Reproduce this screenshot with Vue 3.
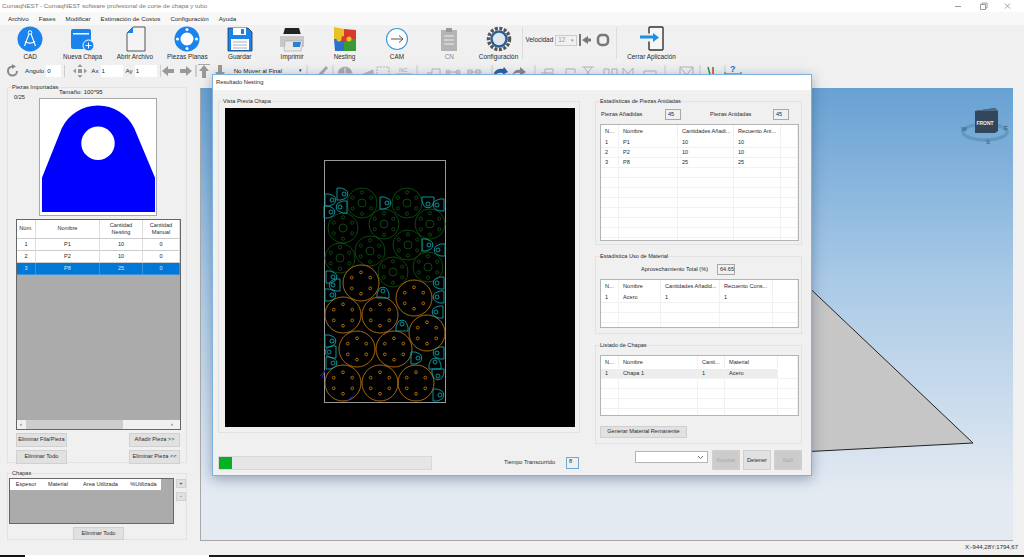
<script setup>
const green = [[362,203],[407,203],[343,228],[384,224],[430,224],[340,258],[370,251],[408,245],[393,272],[428,267]]
const orange = [[361,283],[414,298],[343,315],[380,315],[427,333],[357,349],[394,349],[343,383],[380,383],[416,383]]
const tabs = [[343,194,90],[331,200,90],[341,207,-90],[330,212,90],[386,203,90],[428,203,180],[438,205,-90],[428,245,90],[439,250,-90],[332,277,90],[334,285,-90],[438,283,-90],[331,295,90],[383,292,0],[402,325,0],[438,297,-90],[437,312,-90],[331,341,90],[330,352,-90],[332,363,90],[417,358,90],[438,353,-90],[435,363,0],[438,375,180],[439,395,90]]
const ring = [0,1,2,3,4,5].map(k => {
  const a = (k * 60 - 90) * Math.PI / 180
  return [Math.cos(a) * 10.7, Math.sin(a) * 10.7]
})

const piezas = [
  { n: 1, name: 'P1', nest: 10, man: 0 },
  { n: 2, name: 'P2', nest: 10, man: 0 },
  { n: 3, name: 'P8', nest: 25, man: 0, sel: true }
]

const statLists = [
  {
    title: 'Estadísticas de Piezas Anidadas', cls: 'g-a', height: 117, cols: [18, 59, 56, 47, 19],
    head: ['N...', 'Nombre', 'Cantidades Añadi...', 'Recuento Ani...', ''],
    rows: [['1','P1','10','10',''],['2','P2','10','10',''],['3','P8','25','25','']], blanks: 9
  },
  {
    title: 'Estadística Uso de Material', cls: 'g-b', height: 49, cols: [18, 42, 59, 53, 27],
    head: ['N...', 'Nombre', 'Cantidades Añadid...', 'Recuento Cons...', ''],
    rows: [['1','Acero','1','1','']], blanks: 3
  },
  {
    title: 'Listado de Chapas', cls: 'g-c', height: 61, cols: [18, 79, 27, 53, 22],
    head: ['N...', 'Nombre', 'Canti...', 'Material', ''],
    rows: [['1','Chapa 1','1','Acero','']], blanks: 4, pick: true
  }
]

const colsOf = c => c.slice(0, -1).map(w => w + 'px').join(' ') + ' 1fr'
</script>

<template>
  <div class="app">
    <div class="title">
      <span>CumaqNEST - CumaqNEST software profesional de corte de chapa y tubo</span>
      <div class="winbtns">
        <svg width="70" height="10" viewBox="0 0 70 10">
          <path d="M2 5.500H8" stroke="#999" />
          <path d="M27.500 3.500h5v5h-5zM29 3.500V2h5v5h-1.500" fill="none" stroke="#888" stroke-width=".8" />
          <path d="M52 2.500l5 5M57 2.500l-5 5" stroke="#888" stroke-width=".8" />
        </svg>
      </div>
    </div>

    <div class="menu">
      <span>Archivo</span><span>Fases</span><span>Modificar</span><span>Estimación de Costos</span><span>Configuración</span><span>Ayuda</span>
    </div>

    <div class="tools">
      <div class="tool">
        <svg width="26" height="26" viewBox="0 0 26 26">
          <circle cx="13" cy="13" r="12.500" fill="#1a84ee" />
          <circle cx="13" cy="6.500" r="1.800" fill="none" stroke="#fff" />
          <path d="M12 8l-4.500 12M14 8l4.500 12M8 15.500c3 2 7 2 10 0" fill="none" stroke="#fff" stroke-width="1.100" />
        </svg>
        <span>CAD</span>
      </div>
      <div class="tool">
        <svg width="26" height="26" viewBox="0 0 26 26">
          <rect x="1" y="3" width="20" height="20" rx="2" fill="#1a84ee" />
          <rect x="3" y="7" width="16" height="1.500" fill="#fff" />
          <circle cx="18.500" cy="19.500" r="5.500" fill="#1a84ee" stroke="#fff" />
          <path d="M18.500 16.500v6M15.500 19.500h6" stroke="#fff" />
        </svg>
        <span>Nueva Chapa</span>
      </div>
      <div class="tool">
        <svg width="26" height="26" viewBox="0 0 26 26">
          <path d="M11 1H23V25H5V7z" fill="#f4f4f4" stroke="#555" />
          <path d="M11 1V7H5z" fill="#1a84ee" />
        </svg>
        <span>Abrir Archivo</span>
      </div>
      <div class="tool">
        <svg width="26" height="26" viewBox="0 0 26 26">
          <circle cx="13" cy="13" r="9.500" fill="#fff" stroke="#1a84ee" stroke-width="6" />
          <circle cx="13" cy="3.500" r="1.500" fill="#fff" />
          <circle cx="13" cy="22.500" r="1.500" fill="#fff" />
          <circle cx="3.500" cy="13" r="1.500" fill="#fff" />
          <circle cx="22.500" cy="13" r="1.500" fill="#fff" />
        </svg>
        <span>Piezas Planas</span>
      </div>
      <div class="tool">
        <svg width="26" height="26" viewBox="0 0 26 26">
          <path d="M1 2H21L25 6V25H1z" fill="#1a84ee" stroke="#234" stroke-width=".8" />
          <rect x="6" y="2" width="13" height="7" fill="#fff" />
          <rect x="14" y="3" width="3" height="5" fill="#1a84ee" />
          <rect x="4" y="13" width="18" height="11" fill="#fff" />
          <path d="M6 16h14M6 19h14M6 22h14" stroke="#99a" stroke-width=".8" />
        </svg>
        <span>Guardar</span>
      </div>
      <div class="tool">
        <svg width="26" height="26" viewBox="0 0 26 26">
          <path d="M6 2H20L22 9H4z" fill="#222" />
          <path d="M1 10H25V21H1z" fill="#c8c8c8" />
          <path d="M1 10H25L22 8H4z" fill="#eee" />
          <path d="M6 15H24L22 25H5z" fill="#e8e8e8" stroke="#999" stroke-width=".5" />
          <path d="M14 16H22L21 21H14z" fill="#2a7fd0" />
        </svg>
        <span>Imprimir</span>
      </div>
      <div class="tool">
        <svg width="26" height="26" viewBox="0 0 26 26">
          <path d="M2 1L12 3V13H2z" fill="#e9c026" />
          <path d="M12 3L24 4V13H12z" fill="#d63a2c" />
          <path d="M2 13H12V25H3z" fill="#2d6fc9" />
          <path d="M12 13H24V25H12z" fill="#3a9a35" />
          <circle cx="12" cy="13" r="3" fill="#d63a2c" />
          <circle cx="7" cy="13" r="2.500" fill="#e9c026" />
          <circle cx="17" cy="13" r="2.500" fill="#e9c026" />
        </svg>
        <span>Nesting</span>
      </div>
      <div class="tool">
        <svg width="26" height="26" viewBox="0 0 26 26">
          <circle cx="13" cy="13" r="10.500" fill="#fff" stroke="#3a9ad9" stroke-width="1.100" />
          <path d="M7 13H19M15 9.500l4 3.500-4 3.500" fill="none" stroke="#555" />
        </svg>
        <span>CAM</span>
      </div>
      <div class="tool off">
        <svg width="26" height="26" viewBox="0 0 26 26">
          <path d="M5 4H21V25H5z" fill="#b4b4b4" />
          <rect x="10" y="2" width="6" height="4" fill="#999" />
          <path d="M8 10h10M8 14h10M8 18h10" stroke="#eee" stroke-width="1.200" />
        </svg>
        <span>CN</span>
      </div>
      <div class="tool conf">
        <svg width="26" height="26" viewBox="0 0 26 26">
          <circle cx="13" cy="13" r="10.500" fill="#fff" stroke="#555" stroke-width="3.500" stroke-dasharray="3 1.500" />
          <circle cx="13" cy="13" r="7.500" fill="#dfe6ec" stroke="#2c5f94" stroke-width="2.500" />
        </svg>
        <span>Configuración</span>
      </div>
      <i class="vsep"></i>
      <div class="speed">
        <span>Velocidad</span>
        <span class="speedbox">12<b>▾</b></span>
        <svg width="32" height="14" viewBox="0 0 32 14">
          <path d="M1 1V13" stroke="#777" stroke-width="2" />
          <path d="M3 7L9 3V11zM9 5.500h3v3H9z" fill="#777" />
          <rect x="19" y="2" width="10" height="10" rx="3.500" fill="none" stroke="#777" stroke-width="2.500" />
        </svg>
      </div>
      <i class="vsep"></i>
      <div class="tool close">
        <svg width="26" height="26" viewBox="0 0 26 26">
          <rect x="10" y="1" width="14" height="23" rx="1" fill="#f6f6f6" stroke="#333" stroke-width="1.400" />
          <path d="M10 7.500V15.500" stroke="#f0f0f0" stroke-width="2" />
          <path d="M1 11H15" stroke="#1a90e0" stroke-width="3" />
          <path d="M14 7l6 4.500-6 4.500z" fill="#1a90e0" />
        </svg>
        <span>Cerrar Aplicación</span>
      </div>
    </div>

    <div class="tools2">
      <svg class="ic" width="14" height="14" viewBox="0 0 14 14">
        <path d="M11 7a4.500 4.500 0 1 1-4.500-4.500" fill="none" stroke="#888" stroke-width="2" />
        <path d="M6 0l4 2.500-4 2.500z" fill="#888" />
      </svg>
      <span class="lb ang">Angulo</span><span class="inp w15">0</span>
      <i class="vsep2"></i>
      <svg class="ic move" width="14" height="14" viewBox="0 0 14 14">
        <path d="M7 0l2.500 3h-5zM7 14l2.500-3h-5zM0 7l3-2.500v5zM14 7l-3-2.500v5zM5 5h4v4H5z" fill="#999" />
      </svg>
      <span class="lb">Ax</span><span class="inp w22">1</span>
      <span class="lb ay">Ay</span><span class="inp w22">1</span>
      <svg class="arrows" width="70" height="14" viewBox="0 0 70 14">
        <path d="M0 1V13" stroke="#aaa" />
        <path d="M2 7l6-5v3h6v4H8v3zM32 7l-6-5v3h-6v4h6v3z" fill="#999" />
        <path d="M36 1V13" stroke="#aaa" />
        <path d="M38 0.500H50" stroke="#aaa" />
        <path d="M44 1l5 6h-3v7h-4V7h-3zM60 14l5-6h-3V1h-4v7h-3z" fill="#999" />
      </svg>
      <span class="drop">No Mover al Final<b>▾</b></span>
      <svg class="strip" width="440" height="14" viewBox="305 0 440 14">
        <g fill="none" stroke="#b4b4b4" stroke-width="1">
          <path d="M307 1V14M333 1V14M417 1V14M492 1V14M535 1V14M665 1V14M700 1V14M725 1V14" stroke="#ccc" />
          <path d="M317 14l10-11" stroke="#aaa" stroke-width="3" />
          <circle cx="345" cy="10" r="7" fill="#aaa" />
          <path d="M345 4v12M338 10h14" stroke="#eee" />
          <path d="M357 13l16-7v7z" fill="#bbb" />
          <path d="M377 3h12v11h-12z" stroke-dasharray="2 1" />
          <path d="M396 10h16" />
          <path d="M427 9h5V5h8v9" />
          <path d="M446 8h14M468 8h14" />
          <circle cx="448" cy="8" r="2" /><circle cx="458" cy="8" r="2" /><rect x="468" y="6" width="4" height="4" /><rect x="476" y="6" width="4" height="4" />
          <path d="M541 9h12v5M545 9V5h8v3" />
          <path d="M566 14V5h9v4" />
          <path d="M582 3h12M584 3l8 11M592 3l-8 11" />
          <path d="M604 14V5h5v9M612 14V5h5v9" />
          <path d="M623 14V4l5 6 5-6v10" />
          <path d="M644 14V7h12v7" />
          <path d="M680 3h13v11h-13zM680 3l6.500 8 6.500-8" />
        </g>
        <text x="399" y="8" class="nc">NC</text>
        <path d="M494 9q3-5 9-4l1-2 4 5-6 3 1-2q-5-1-8 2z" fill="#2a5fa8" />
        <path d="M512 11q3-6 8-5l0-3 6 5-6 4v-3q-4-1-8 2z" fill="#888" />
        <path d="M708 3l3 11" stroke="#2a9a3a" stroke-width="1.500" />
        <path d="M713 3v11" stroke="#d43a2c" stroke-width="1.500" />
        <path d="M725 8v3M741 8v3M725 10h16" stroke="#2a6fc0" fill="none" />
        <text x="730" y="8" class="help">?</text>
      </svg>
    </div>

    <div class="main">
      <aside class="left">
        <fieldset class="box imported">
          <legend>Piezas Importadas</legend>
          <div class="previewrow">
            <span class="count">0/25</span>
            <div class="previewcol">
              <span class="size">Tamaño: 100*95</span>
              <svg class="preview" width="118" height="118" viewBox="39 98 118 118">
                <path fill-rule="evenodd" fill="#0000ff" d="M41 213V178L61 128A41 41 0 0 1 135 128L156 178V213ZM115 143A17 17 0 1 0 81 143A17 17 0 1 0 115 143Z" />
              </svg>
            </div>
          </div>
          <div class="ptable">
            <div class="prow phead">
              <span>Núm.</span><span>Nombre</span><span>Cantidad<br>Nesting</span><span>Cantidad<br>Manual</span>
            </div>
            <div v-for="p in piezas" :key="p.n" class="prow" :class="{ sel: p.sel }">
              <span>{{ p.n }}</span><span>{{ p.name }}</span><span>{{ p.nest }}</span><span>{{ p.man }}</span>
            </div>
            <div class="pfill"></div>
            <div class="hscroll">
              <b>‹</b><i></i><b>›</b>
            </div>
          </div>
          <div class="btnrow">
            <button>Eliminar Fila/Pieza</button><button>Añadir Pieza &gt;&gt;</button>
          </div>
          <div class="btnrow">
            <button>Eliminar Todo</button><button>Eliminar Pieza &lt;&lt;</button>
          </div>
        </fieldset>

        <fieldset class="box chapas">
          <legend>Chapas</legend>
          <div class="chaprow">
            <div class="ctable">
              <div class="chead">
                <span>Espesor</span><span>Material</span><span>Area Utilizada</span><span>%Utilizada</span>
              </div>
            </div>
            <div class="pm"><button>+</button><button>-</button></div>
          </div>
          <button class="delall">Eliminar Todo</button>
        </fieldset>
      </aside>

      <div class="view">
        <svg width="813" height="453" viewBox="200 88 813 453">
          <path d="M800 279L973 443L800 452Z" fill="#c6c6c6" stroke="#222" />
          <ellipse cx="985" cy="132" rx="22" ry="8" fill="none" stroke="#5f93bb" stroke-width="3.500" opacity=".8" />
          <path d="M975 111l20-3 3 3v20l-3 2h-20z" fill="#33475c" />
          <path d="M975 111l20-3 3 3h-23z" fill="#50687f" />
          <text x="985" y="125" class="cube">FRONT</text>
          <text x="964" y="131" class="compass">W</text>
          <text x="1006" y="130" class="compass">E</text>
          <text x="988" y="144" class="compass">S</text>
        </svg>
      </div>
      <div class="strip-r"></div>
    </div>

    <div class="status"><span>X:-944,28Y:1794,67</span></div>
    <div class="taskbar"><i></i><i></i><i></i></div>

    <div class="dialog">
      <div class="dtitle">Resultado Nesting</div>
      <div class="dbody">
        <div class="dmain">
          <fieldset class="box vista">
            <legend>Vista Previa Chapa</legend>
            <svg class="canvas" width="350" height="319" viewBox="225 108 350 319">
              <rect x="324.500" y="160.500" width="121" height="242" fill="none" stroke="#999" />
              <g fill="none" stroke="#0f4f10" stroke-width=".9">
                <g v-for="(c, i) in green" :key="'g' + i" :transform="`translate(${c[0]} ${c[1]})`">
                  <circle r="15" />
                  <circle r="4" />
                  <circle v-for="(h, j) in ring" :key="j" :cx="h[0]" :cy="h[1]" r="1.600" />
                </g>
              </g>
              <g fill="none" stroke="#b9740f" stroke-width=".9">
                <g v-for="(c, i) in orange" :key="'o' + i" :transform="`translate(${c[0]} ${c[1]})`">
                  <circle r="18" />
                  <circle v-for="(h, j) in ring" :key="j" :cx="h[0]" :cy="h[1]" r="1.400" />
                </g>
              </g>
              <g fill="none" stroke="#0fa3a8" stroke-width=".9">
                <g v-for="(t, i) in tabs" :key="'t' + i" :transform="`translate(${t[0]} ${t[1]}) rotate(${t[2]})`">
                  <path d="M-6 6V2L-4.500-2A5 5 0 0 1 4.500-2L6 2V6Z" />
                  <circle cy="-1" r="2" />
                </g>
              </g>
              <path d="M320 376l5-5M322 378l3-8M346 402l7-6" stroke="#2222cc" fill="none" />
            </svg>
          </fieldset>
          <div class="stats">
            <fieldset v-for="l in statLists" :key="l.title" class="box" :class="l.cls">
              <legend>{{ l.title }}</legend>
              <div v-if="l.cls === 'g-a'" class="counts">
                <span>Piezas Añadidas</span><span class="val">45</span>
                <span>Piezas Anidadas</span><span class="val">45</span>
              </div>
              <div v-if="l.cls === 'g-b'" class="usage">
                <span>Aprovechamiento Total (%)</span><span class="val">64.65</span>
              </div>
              <div class="list" :style="{ height: l.height + 'px' }">
                <div class="lrow lhead" :style="{ gridTemplateColumns: colsOf(l.cols) }">
                  <span v-for="(h, i) in l.head" :key="i">{{ h }}</span>
                </div>
                <div v-for="(r, k) in l.rows" :key="k" class="lrow" :class="{ hl: l.pick }" :style="{ gridTemplateColumns: colsOf(l.cols) }">
                  <span v-for="(v, i) in r" :key="i">{{ v }}</span>
                </div>
                <div v-for="b in l.blanks" :key="'b' + b" class="lrow" :style="{ gridTemplateColumns: colsOf(l.cols) }">
                  <span v-for="(v, i) in l.cols" :key="i"></span>
                </div>
              </div>
              <button v-if="l.pick" class="gen">Generar Material Remanente</button>
            </fieldset>
          </div>
        </div>
        <div class="dfoot">
          <div class="progress"><i></i></div>
          <span class="elapsed">Tiempo Transcurrido</span>
          <span class="timebox">8</span>
          <span class="combo"><svg width="7" height="5" viewBox="0 0 7 5"><path d="M1 1l2.500 2.500L6 1" fill="none" stroke="#666" /></svg></span>
          <button class="big" disabled>Aceptar</button>
          <button class="big">Detener</button>
          <button class="big" disabled>Salir</button>
        </div>
      </div>
    </div>
  </div>
</template>

<style>
html, body { margin: 0; overflow: hidden; }
</style>

<style scoped>
.app {
  position: relative;
  display: flex;
  flex-direction: column;
  width: 1024px;
  height: 557px;
  overflow: hidden;
  background: #f0f0f0;
  color: #2a2a2a;
  font: 5.600px/1.2 "Liberation Sans", Arial, sans-serif;
}
.title {
  display: flex;
  justify-content: space-between;
  align-items: center;
  height: 12px;
  padding-left: 2px;
  background: #fff;
  color: #777;
  font-size: 6.200px;
}
.winbtns { display: flex; padding-right: 1px; }
.menu {
  display: flex;
  gap: 10px;
  align-items: center;
  height: 13px;
  padding-left: 8px;
  background: #f8f8f8;
  font-size: 6.200px;
}

.tools {
  display: flex;
  align-items: flex-start;
  height: 37px;
  padding-left: 4px;
  flex: none;
  font-size: 6.400px;
}
.tool {
  display: flex;
  flex-direction: column;
  align-items: center;
  width: 52.400px;
  padding-top: 1px;
  height: 36px;
  box-sizing: border-box;
  justify-content: space-between;
  white-space: nowrap;
}
.tool svg { flex: none; }
.tool.off { color: #888; }
.tool.conf { width: 46px; }
.tool.close { width: 68px; margin-left: 1px; }
.vsep { width: 1px; height: 32px; margin-top: 2px; background: #ddd; }
.speed { display: flex; align-items: center; height: 30px; width: 93px; padding-left: 3px; gap: 2px; box-sizing: border-box; }
.speedbox {
  display: flex;
  justify-content: space-between;
  width: 22px;
  flex: none;
  height: 11px;
  padding: 0 2px;
  box-sizing: border-box;
  align-items: center;
  border: 1px solid #ccc;
  color: #999;
}
.speedbox b { font-weight: 400; font-size: 5px; }
.speed svg { flex: none; }

.tools2 {
  display: flex;
  align-items: center;
  height: 18px;
  padding-left: 6px;
  flex: none;
  font-size: 6.200px;
}
.lb { margin-left: 4px; }
.ang { margin-left: 5px; }
.ay { margin-left: 3px; }
.inp {
  display: block;
  margin-left: 2px;
  height: 12px;
  line-height: 12px;
  padding-left: 1px;
  box-sizing: border-box;
  background: #fff;
}
.w15 { width: 15px; }
.w22 { width: 22px; }
.vsep2 { width: 1px; height: 12px; margin: 0 0 0 3px; background: #ccc; }
.move { margin-left: 8px; }
.arrows { margin-left: 3px; }
.drop {
  display: flex;
  justify-content: space-between;
  width: 72px;
  margin-left: 2px;
  box-sizing: border-box;
  padding: 0 2px;
  color: #222;
}
.drop b { font-weight: 400; font-size: 5px; }
.strip { margin-left: 1px; flex: none; }
.help { font: 700 9px "Liberation Sans", sans-serif; fill: #2a6fc0; }
.nc { font: 6px "Liberation Sans", sans-serif; fill: #aaa; }

.main { display: flex; flex: none; height: 453px; margin-top: 8px; }
.left { width: 200px; flex: none; padding-left: 7px; box-sizing: border-box; margin-top: -4px; }

.box {
  margin: 0;
  padding: 0;
  min-width: 0;
  border: 1px solid #e2e2e2;
  box-sizing: border-box;
}
.box legend { padding: 0; white-space: nowrap; }

.imported { width: 180px; height: 379px; padding: 0 6px 0 8px; }
.imported legend { margin-left: -4px; }
.previewrow { display: flex; height: 128px; }
.count { width: 25px; margin-left: -2px; margin-top: 3px; flex: none; }
.previewcol { display: flex; flex-direction: column; }
.size { margin-left: 20px; margin-top: -2px; height: 6px; white-space: nowrap; font-size: 6px; }
.preview { background: #fff; border: 1px solid #a8a8a8; margin-top: 3px; box-sizing: border-box; flex: none; }

.ptable {
  display: flex;
  flex-direction: column;
  width: 165px;
  height: 211px;
  box-sizing: border-box;
  border: 1px solid #666;
  background: #ababab;
}
.prow {
  display: grid;
  grid-template-columns: 19px 64px 43px 1fr;
  height: 12px;
  background: #fff;
  text-align: center;
  align-items: center;
  flex: none;
}
.prow span { border-right: 1px solid #ddd; height: 100%; display: flex; align-items: center; justify-content: center; border-bottom: 1px solid #ccc; box-sizing: border-box; }
.phead { height: 19px; }
.sel { background: #0078d7; color: #dcebf8; }
.sel span { border-color: #3c93dc; }
.pfill { flex: 1; }
.hscroll { display: flex; height: 9px; background: #f0f0f0; align-items: center; justify-content: space-between; flex: none; padding: 0 3px; }
.hscroll b { font-weight: 400; width: 6px; }
.hscroll i { height: 9px; width: 97px; margin-right: 48px; background: #cdcdcd; }

button {
  padding: 0;
  font: inherit;
  color: #2a2a2a;
  background: #e1e1e1;
  border: 1px solid #d0d0d0;
  box-sizing: border-box;
}
.btnrow { display: flex; justify-content: space-between; width: 164px; margin-top: 3px; }
.btnrow button { width: 51px; height: 14px; white-space: nowrap; }

.chapas { width: 180px; height: 70px; margin-top: 7px; padding: 1px 0 0 1px; text-align: left; }
.chapas legend { margin-left: 3px; }
.chaprow { display: flex; gap: 2px; }
.ctable { width: 166px; height: 46px; box-sizing: border-box; border: 1px solid #666; background: #ababab; }
.chead { display: grid; grid-template-columns: 32px 32px 53px 33px; width: 151px; height: 11px; background: #fff; align-items: center; text-align: center; white-space: nowrap; }
.pm { display: flex; flex-direction: column; gap: 4px; padding-top: 1px; }
.pm button { width: 10px; height: 9px; line-height: 6px; }
.delall { display: block; width: 51px; height: 13px; margin: 3px 0 0 64px; }

.view {
  flex: none;
  width: 813px;
  height: 453px;
  background: linear-gradient(#67a1d3, #a9c9e6 42%, #e4eaf2 90%);
  box-shadow: inset 1px -1px 0 #a8a8a8;
  overflow: hidden;
}
.view svg { display: block; }
.cube { font: 700 5px "Liberation Sans", sans-serif; fill: #e8eef4; text-anchor: middle; }
.compass { font: 700 6px "Liberation Sans", sans-serif; fill: #3c6c94; text-anchor: middle; }
.strip-r { flex: 1; }
.status { display: flex; justify-content: flex-end; align-items: center; height: 14px; padding-right: 6px; flex: none; font-size: 6px; }
.taskbar { display: grid; grid-template-columns: 25px 184px 1fr; height: 2px; flex: none; }
.taskbar i:nth-child(1) { background: #111; }
.taskbar i:nth-child(2) { background: #fff; }
.taskbar i:nth-child(3) { background: #1d1712; }

.dialog {
  position: absolute;
  left: 212px;
  top: 74px;
  width: 600px;
  height: 402px;
  box-sizing: border-box;
  border: 1px solid #7db2de;
  background: #f0f0f0;
  box-shadow: 0 3px 12px rgba(40, 60, 90, .4);
  display: flex;
  flex-direction: column;
}
.dtitle { height: 15px; line-height: 15px; padding-left: 3px; background: #fff; color: #2a2a2a; flex: none; font-size: 5.800px; }
.dbody { flex: 1; display: flex; flex-direction: column; padding: 8px 5px 0 5px; }
.dmain { display: flex; height: 357px; flex: none; }
.vista { width: 362px; height: 335px; padding: 3px 0 0 6px; }
.vista legend { margin-left: -2px; }
.canvas { display: block; background: #000; }
.stats { display: flex; flex-direction: column; width: 207px; margin-left: 15px; }
.stats .box { padding: 0 1px 0 4px; }
.stats legend { margin-left: 0; }
.g-a { height: 147px; }
.g-b { height: 81px; margin-top: 8px; }
.g-c { height: 102px; margin-top: 8px; }
.counts { display: grid; grid-template-columns: 64px 16px 29px 63px 16px; height: 19px; align-items: center; padding-left: 1px; }
.counts span:nth-child(3) { grid-column: 4; }
.counts span:nth-child(4) { grid-column: 5; }
.usage { display: flex; justify-content: flex-end; gap: 9px; align-items: center; height: 19px; padding-right: 65px; }
.val { display: block; height: 11px; line-height: 9px; padding-left: 2px; min-width: 14px; box-sizing: border-box; border: 1px solid #a8a8a8; }
.list {
  width: 199px;
  overflow: hidden;
  box-sizing: border-box;
  border: 1px solid #b4b4b4;
  background: #fff;
}
.g-c .list { margin-top: 6px; height: 62px; }
.lrow { display: grid; height: 9px; line-height: 9px; border-bottom: 1px solid #f1f1f1; box-sizing: content-box; }
.lrow span { padding-left: 4px; border-right: 1px solid #f1f1f1; white-space: nowrap; overflow: hidden; }
.lhead { height: 12px; line-height: 12px; border-bottom: 0; margin-bottom: 1px; }
.lhead span { border-right: 1px solid #eee; }
.hl { background: linear-gradient(to right, #ededed 177px, #fff 177px); }
.gen { display: block; width: 87px; height: 12px; margin-top: 10px; white-space: nowrap; }

.dfoot { display: flex; align-items: flex-start; }
.progress { width: 214px; height: 14px; box-sizing: border-box; margin-top: 1px; background: #e6e6e6; border: 1px solid #d8d8d8; }
.progress i { display: block; width: 13px; height: 12px; background: #06b025; }
.elapsed { margin: 4px 0 0 72px; width: 62px; }
.timebox { width: 13px; height: 12px; margin-top: 2px; box-sizing: border-box; border: 1px solid #6fa8dc; padding-left: 2px; }
.combo { display: flex; justify-content: flex-end; align-items: center; width: 73px; height: 12px; margin: -4px 0 0 56px; padding-right: 3px; box-sizing: border-box; background: #fff; border: 1px solid #b4b4b4; }
.big { width: 28px; height: 20px; margin: -5px 0 0 3px; }
.combo + .big { margin-left: 4px; }
.big[disabled] { color: #aaa; background: #ccc; }
</style>
